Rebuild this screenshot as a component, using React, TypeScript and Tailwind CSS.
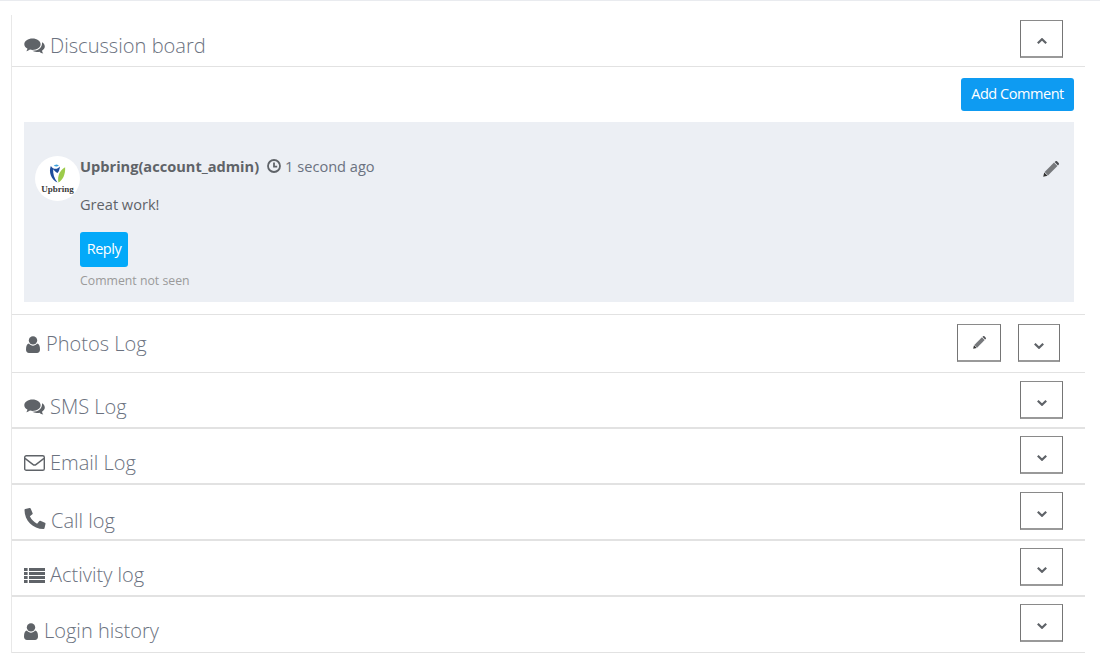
import React from 'react';
import { FaPhoneAlt } from 'react-icons/fa';

const font = "font-['Open_Sans','Liberation_Sans',sans-serif]";

const CommentsIcon = () => (
  <svg viewBox="0 0 21 17" className="h-[17px] w-[21px] shrink-0 fill-[#5f6368]">
    <path d="M8.5 0.5C13 0.5 16.6 3 16.6 6.2S13 11.9 8.5 11.9C7.6 11.9 6.8 11.8 6 11.6C5 12.5 3.6 13.1 2.3 13.3C2.9 12.5 3.3 11.6 3.4 10.6C1.5 9.6 0.3 8 0.3 6.2C0.3 3 4 0.5 8.5 0.5Z" />
    <path d="M18 4.3C19.7 5.3 20.8 6.8 20.8 8.5C20.8 10.2 19.7 11.7 18 12.7C18.1 13.8 18.6 14.8 19.3 15.6C17.9 15.4 16.5 14.7 15.5 13.8C14.5 14 13.5 14.1 12.6 14C10.9 13.9 9.4 13.5 8.2 12.8C13.8 13.2 18.6 9.6 18 4.3Z" />
  </svg>
);

const UserIcon = () => (
  <svg viewBox="0 0 14 17" className="h-[17px] w-[14px] shrink-0 fill-[#5f6368]">
    <circle cx="7" cy="4.4" r="4.2" />
    <path d="M3 7.6C4 9 5.4 9.7 7 9.7S10 9 11 7.6C13 7.9 14 9.8 14 13.6C14 15.7 12.8 17 11 17H3C1.2 17 0 15.7 0 13.6C0 9.8 1 7.9 3 7.6Z" />
  </svg>
);

const EnvelopeIcon = () => (
  <svg viewBox="0 0 21 16" className="h-[16px] w-[21px] shrink-0 fill-none stroke-[#5f6368] stroke-[1.4]">
    <rect x="0.7" y="0.7" width="19.6" height="14.6" rx="1.6" />
    <path d="M1 3.4L8.8 9.4C9.8 10.2 11.2 10.2 12.2 9.4L20 3.4" />
  </svg>
);

const ListIcon = () => (
  <svg viewBox="0 0 21 15" className="h-[15px] w-[21px] shrink-0 fill-[#5f6368]">
    <rect x="0" y="0" width="3.6" height="3" />
    <rect x="5" y="0" width="16" height="3" />
    <rect x="0" y="4" width="3.6" height="3" />
    <rect x="5" y="4" width="16" height="3" />
    <rect x="0" y="8" width="3.6" height="3" />
    <rect x="5" y="8" width="16" height="3" />
    <rect x="0" y="12" width="3.6" height="3" />
    <rect x="5" y="12" width="16" height="3" />
  </svg>
);

const ClockIcon = () => (
  <svg viewBox="0 0 14 14" className="h-[14px] w-[14px] shrink-0 fill-none stroke-[#5f6368] stroke-[1.8]">
    <circle cx="7" cy="7" r="6" />
    <path d="M7 3.4V7.6H10.2" />
  </svg>
);

const PencilIcon = ({ className }: { className: string }) => (
  <svg viewBox="0 0 16 16" className={className}>
    <path d="M0.2 15.8L1.2 11.4L4.6 14.8Z" fill="#333" />
    <path d="M1.6 11L11 1.6L14.4 5L5 14.4Z" fill="#77797c" />
    <path d="M11.6 1L12.6 0.2C13.1 -0.1 13.6 0 14 0.3L15.7 2C16 2.4 16.1 2.9 15.8 3.4L15 4.4Z" fill="#4a4c50" />
  </svg>
);

const Chevron = ({ up }: { up?: boolean }) => (
  <svg viewBox="0 0 10 6" className="h-[6px] w-[10px] fill-none stroke-[#5f6368] stroke-[2.2]">
    <path d={up ? 'M0.8 5.2L5 1.2L9.2 5.2' : 'M0.8 0.8L5 4.8L9.2 0.8'} />
  </svg>
);

const btnBorder = 'border border-b-2 border-[#757575] border-t-[#8a8a8a] border-b-[#999999]';

const ToggleButton = ({ up, className = '', width = 'w-[43px]' }: { up?: boolean; className?: string; width?: string }) => (
  <button className={`flex h-[38px] items-center justify-center bg-white ${up ? 'pt-[5px]' : 'pt-[6px]'} ${btnBorder} ${width} ${className}`}>
    <Chevron up={up} />
  </button>
);

const LogRow = ({ icon, label, gap = 'gap-[5px]', pl = 'pl-3', pt = 'pt-[20px]', btn = 'mt-[7px]', border = 'border-b-2' }: { icon: React.ReactNode; label: string; gap?: string; pl?: string; pt?: string; btn?: string; border?: string }) => (
  <div className={`flex h-[56px] items-start justify-between border-[#e2e2e2] pr-[22px] ${pl} ${border}`}>
    <div className={`flex items-center text-[20px] font-light leading-[28px] text-[#6b7280] ${gap} ${pt}`}>
      {icon}
      <span>{label}</span>
    </div>
    <ToggleButton className={btn} />
  </div>
);

const Logo = () => (
  <div className="mt-[2px] flex h-[45px] w-[45px] shrink-0 flex-col items-center rounded-full bg-white pt-[8px]">
    <svg viewBox="0 0 20 20" className="h-[19px] w-[19px]">
      <path d="M3 2C0.5 8 3 16 10 19.5C6.5 15 5 10 5.5 5.5C6.5 7 8 8.5 10 9.5C11.5 7.5 12.5 5 12.5 2.5C11 4 9.5 5 8 5C6 5 4.5 4 3 2Z" fill="#1f4e9c" />
      <path d="M6 1.5C7.5 3 10 3 11.5 1.2L8.8 0.4Z" fill="#3aa0dc" />
      <path d="M18 3.5C18.5 11 15.5 17 11 19.5C9.5 13 12.5 6.5 18 3.5Z" fill="#9ccb4a" />
    </svg>
    <span className="font-['Liberation_Serif',serif] text-[9px] font-bold leading-[12px] text-[#3a3a3a]">Upbring</span>
  </div>
);

export default function App() {
  return (
    <div className={`${font} min-h-[661px] bg-white text-[14.6px] text-[#5f6368]`}>
      <div className="h-px bg-[#e9ebef]" />
      <div className="ml-[11px] mr-[15px] mt-[14px] border-l border-[#e8e8e8]">
        <div className="flex h-[52px] items-start justify-between border-b border-[#e2e2e2] pl-3 pr-[22px]">
          <div className="flex items-center gap-[5px] pt-[17px] text-[20.1px] font-light leading-[28px] text-[#6b7280]">
            <CommentsIcon />
            <span>Discussion board</span>
          </div>
          <ToggleButton up className="mt-[5px]" />
        </div>

        <div className="border-b border-[#e2e2e2] pb-3 pl-3 pr-[11px] pt-[11px]">
          <div className="flex justify-end">
            <button className="h-[33px] w-[113px] rounded-[3px] bg-[#0e9bf2] pb-[2px] text-[14.5px] tracking-[-0.45px] text-white">Add Comment</button>
          </div>
          <div className="mt-[11px] flex h-[180px] justify-between bg-[#eceff4] pl-[11px] pr-[15px] pt-[32px]">
            <div className="flex">
              <Logo />
              <div>
                <div className="flex items-center gap-[8px] leading-[24px]">
                  <span className="font-bold">Upbring(account_admin)</span>
                  <span className="flex items-center gap-[4px] text-[#6b7280]">
                    <ClockIcon />
                    1 second ago
                  </span>
                </div>
                <div className="mt-[16px] leading-[20px]">Great work!</div>
                <button className="mt-[18px] block h-[35px] w-[48px] rounded-[3px] bg-[#03a9f9] pb-px text-[14.5px] tracking-[-0.45px] text-white">Reply</button>
                <div className="mt-[7px] text-[12.3px] leading-[14px] text-[#9a9a9a]">Comment not seen</div>
              </div>
            </div>
            <PencilIcon className="mt-[7px] h-4 w-4" />
          </div>
        </div>

        <div className="flex h-[58px] items-start justify-between border-b border-[#e2e2e2] pl-[14px] pr-[25px]">
          <div className="flex items-center gap-[6px] pt-[15px] text-[20px] font-light leading-[28px] text-[#6b7280]">
            <UserIcon />
            <span>Photos Log</span>
          </div>
          <div className="mt-[9px] flex gap-[17px]">
            <button className={`flex h-[38px] w-[44px] items-center justify-center ${btnBorder}`}>
              <PencilIcon className="h-[13px] w-[13px]" />
            </button>
            <ToggleButton width="w-[42px]" />
          </div>
        </div>

        <LogRow icon={<CommentsIcon />} label="SMS Log" btn="mt-2" />
        <LogRow icon={<EnvelopeIcon />} label="Email Log" />
        <LogRow icon={<FaPhoneAlt className="h-[21px] w-[22px] shrink-0 -mt-[6px] text-[#5f6368]" />} label="Call log" pt="pt-[22px]" />
        <LogRow icon={<ListIcon />} label="Activity log" />
        <LogRow icon={<UserIcon />} label="Login history" gap="gap-[6px]" border="border-b" />
      </div>
    </div>
  );
}
